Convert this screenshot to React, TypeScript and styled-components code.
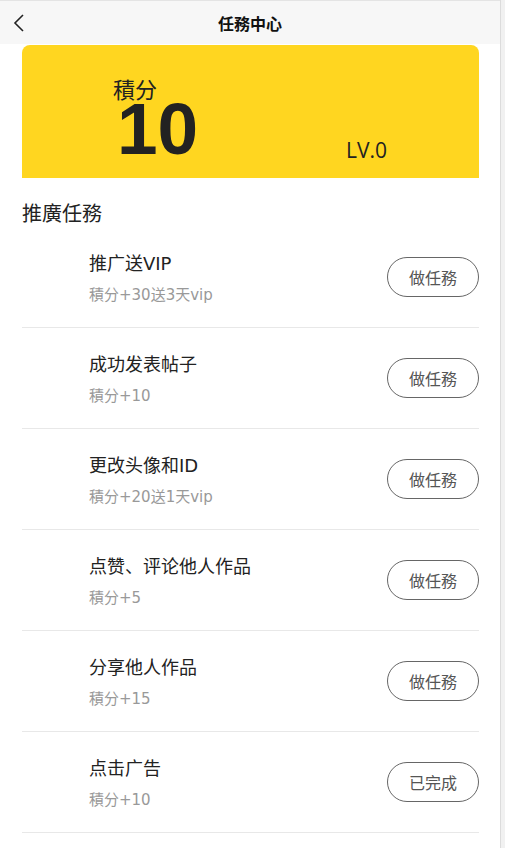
import styled, { createGlobalStyle } from 'styled-components';

const GlobalStyle = createGlobalStyle`
    html {
        background: #f1f1f1;
    }
    body {
        margin: 0;
        width: 500px;
        min-height: 100vh;
        background: #ffffff;
        border-right: 1px solid #dcdcdc;
        font-family: "DejaVu Sans", "Noto Sans CJK SC", sans-serif;
        color: #222;
    }
`

type Task = {
    title: string;
    reward: string;
    done?: boolean;
};

const tasks: Task[] = [
    { title: '推广送VIP', reward: '積分+30送3天vip' },
    { title: '成功发表帖子', reward: '積分+10' },
    { title: '更改头像和ID', reward: '積分+20送1天vip' },
    { title: '点赞、评论他人作品', reward: '積分+5' },
    { title: '分享他人作品', reward: '積分+15' },
    { title: '点击广告', reward: '積分+10', done: true },
];

export default function App() {
    return (
        <Page>
            <GlobalStyle />
            <Header>
                <BackButton>
                    <svg width="12" height="18" viewBox="0 0 12 18" fill="none">
                        <path d="M10 1 L2 9 L10 17" stroke="#222" strokeWidth="1.6" />
                    </svg>
                </BackButton>
                <HeaderTitle>任務中心</HeaderTitle>
            </Header>
            <Content>
                <PointsCard>
                    <PointsBlock>
                        <PointsLabel>積分</PointsLabel>
                        <PointsValue>10</PointsValue>
                    </PointsBlock>
                    <Level>LV.0</Level>
                </PointsCard>
                <SectionTitle>推廣任務</SectionTitle>
                <TaskList>
                    {tasks.map((task) => (
                        <TaskRow key={task.title}>
                            <TaskInfo>
                                <TaskTitle>{task.title}</TaskTitle>
                                <TaskReward>{task.reward}</TaskReward>
                            </TaskInfo>
                            <TaskButton>{task.done ? '已完成' : '做任務'}</TaskButton>
                        </TaskRow>
                    ))}
                </TaskList>
            </Content>
        </Page>
    );
}

const Page = styled.div`
    display: flex;
    flex-direction: column;
`

const Header = styled.header`
    position: relative;
    height: 44px;
    display: flex;
    align-items: center;
    justify-content: center;
    background: #f7f7f7;
    border-top: 1px solid #e4e4e4;
    box-sizing: border-box;
`

const BackButton = styled.div`
    position: absolute;
    left: 13px;
    top: 13px;
    display: flex;
`

const HeaderTitle = styled.h1`
    margin: 0;
    font-family: "Noto Sans CJK SC", sans-serif;
    font-size: 16px;
    font-weight: 700;
    color: #111;
`

const Content = styled.main`
    padding: 1px 21px 0 22px;
`

const PointsCard = styled.section`
    height: 133px;
    box-sizing: border-box;
    background: #ffd620;
    border-radius: 8px 8px 0 0;
    display: flex;
    align-items: flex-start;
    justify-content: space-between;
    padding: 31px 92px 17px 91px;
`

const PointsBlock = styled.div`
    display: flex;
    flex-direction: column;
`

const PointsLabel = styled.span`
    font-family: "Noto Sans CJK SC", sans-serif;
    font-size: 22px;
    line-height: 24px;
    color: #222;
`

const PointsValue = styled.span`
    font-family: "Liberation Sans", Arial, sans-serif;
    font-weight: 700;
    font-size: 73px;
    line-height: 56px;
    margin-top: 1px;
    padding-left: 4px;
    color: #222;
`

const Level = styled.span`
    align-self: flex-end;
    font-family: "Open Sans", sans-serif;
    font-size: 21px;
    line-height: 22px;
    color: #222;
`

const SectionTitle = styled.h2`
    margin: 21px 0 0;
    font-family: "Noto Sans CJK SC", sans-serif;
    font-size: 20px;
    font-weight: 400;
    line-height: 28px;
    color: #222;
`

const TaskList = styled.ul`
    list-style: none;
    margin: 0;
    padding: 0;
`

const TaskRow = styled.li`
    height: 101px;
    box-sizing: border-box;
    border-bottom: 1px solid #e8e8e8;
    display: flex;
    align-items: center;
    justify-content: space-between;
    padding-left: 67px;
`

const TaskInfo = styled.div`
    display: flex;
    flex-direction: column;
    gap: 9px;
    padding-top: 4px;
`

const TaskTitle = styled.span`
    font-size: 18px;
    line-height: 24px;
    color: #222;
`

const TaskReward = styled.span`
    font-size: 15px;
    line-height: 21px;
    color: #999;
`

const TaskButton = styled.button`
    width: 92px;
    height: 40px;
    border: 1px solid #666;
    border-radius: 20px;
    background: #fff;
    font-family: "Noto Sans CJK SC", sans-serif;
    font-size: 16px;
    color: #555;
    padding: 0;
`
